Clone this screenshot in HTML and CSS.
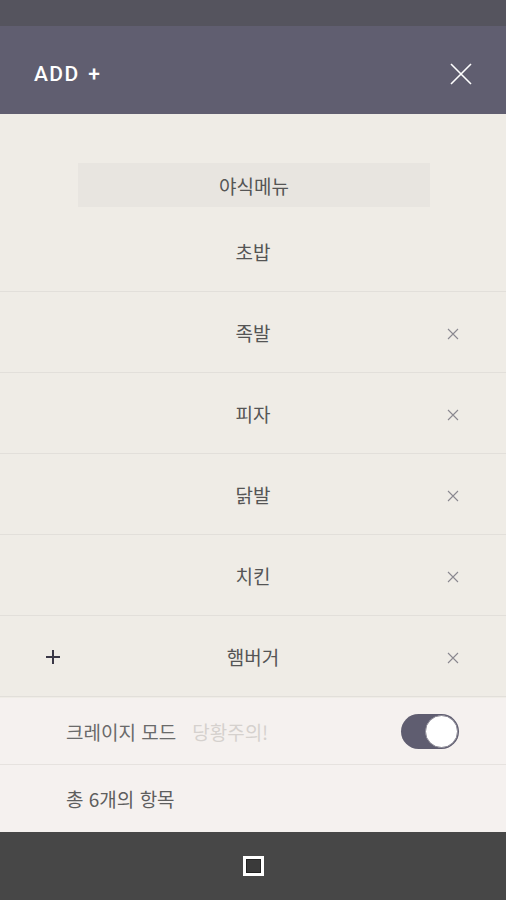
FILE: index.html
```html
<!DOCTYPE html>
<html lang="ko">
<head>
<meta charset="utf-8">
<link rel="stylesheet" href="styles.css">
</head>
<body>
<div class="screen">
  <div class="statusbar"></div>
  <header class="appbar">
    <span class="appbar-title">ADD +</span>
    <svg class="close" width="22" height="22" viewBox="0 0 22 22"><path d="M1 1L21 21M21 1L1 21" stroke="#fff" stroke-width="1.6" fill="none"/></svg>
  </header>
  <main class="content">
    <div class="title-box">야식메뉴</div>
    <ul class="list">
      <li class="row"><span class="lead"></span><span class="label">초밥</span><span class="trail"></span></li>
      <li class="row"><span class="lead"></span><span class="label">족발</span><span class="trail"><svg width="12" height="12" viewBox="0 0 12 12"><path d="M1 1L11 11M11 1L1 11" stroke="#8a8890" stroke-width="1.1"/></svg></span></li>
      <li class="row"><span class="lead"></span><span class="label">피자</span><span class="trail"><svg width="12" height="12" viewBox="0 0 12 12"><path d="M1 1L11 11M11 1L1 11" stroke="#8a8890" stroke-width="1.1"/></svg></span></li>
      <li class="row"><span class="lead"></span><span class="label">닭발</span><span class="trail"><svg width="12" height="12" viewBox="0 0 12 12"><path d="M1 1L11 11M11 1L1 11" stroke="#8a8890" stroke-width="1.1"/></svg></span></li>
      <li class="row"><span class="lead"></span><span class="label">치킨</span><span class="trail"><svg width="12" height="12" viewBox="0 0 12 12"><path d="M1 1L11 11M11 1L1 11" stroke="#8a8890" stroke-width="1.1"/></svg></span></li>
      <li class="row last"><span class="lead"><svg width="14" height="14" viewBox="0 0 14 14"><path d="M7 0V14M0 7H14" stroke="#3a3846" stroke-width="2"/></svg></span><span class="label">햄버거</span><span class="trail"><svg width="12" height="12" viewBox="0 0 12 12"><path d="M1 1L11 11M11 1L1 11" stroke="#8a8890" stroke-width="1.1"/></svg></span></li>
    </ul>
  </main>
  <section class="footer">
    <div class="mode-row">
      <span class="mode-label">크레이지 모드</span>
      <span class="mode-hint">당황주의!</span>
      <span class="toggle"><span class="knob"></span></span>
    </div>
    <div class="count-row">총 6개의 항목</div>
  </section>
  <nav class="navbar">
    <span class="nav-square"></span>
  </nav>
</div>
</body>
</html>
```
FILE: styles.css
```css
* { box-sizing: border-box; }
html, body { margin: 0; padding: 0; }
body {
  font-family: "Noto Sans CJK KR", "Noto Sans", sans-serif;
  background: #efece6;
}
.screen {
  width: 506px;
  height: 900px;
  display: flex;
  flex-direction: column;
  overflow: hidden;
}
.statusbar {
  height: 26px;
  background: #55545e;
}
.appbar {
  height: 88px;
  background: #605e70;
  display: flex;
  align-items: center;
  justify-content: space-between;
  padding: 8px 34px 0 34px;
}
.appbar-title {
  color: #fff;
  font-family: "Roboto", "Noto Sans", sans-serif;
  font-size: 21px;
  font-weight: 500;
  letter-spacing: 1.4px;
  word-spacing: 2px;
}
.close { margin-right: 0; }
.content {
  background: #efece6;
  padding-top: 49px;
  flex: 1;
}
.title-box {
  margin: 0 76px 0 78px;
  height: 44px;
  background: #e8e5e0;
  display: flex;
  align-items: center;
  justify-content: center;
  color: #555;
  font-size: 19px;
}
.list {
  list-style: none;
  margin: 4px 0 0 0;
  padding: 0;
}
.row {
  height: 81px;
  border-bottom: 1px solid #e2dfda;
  display: grid;
  grid-template-columns: 106px 1fr 106px;
  align-items: center;
  color: #555;
  font-size: 19px;
}
.lead { display: flex; justify-content: flex-start; padding-left: 46px; padding-top: 2px; }
.label { text-align: center; }
.trail { display: flex; justify-content: flex-end; padding-right: 47px; padding-top: 4px; }
.footer {
  background: #f5f1ef;
  height: 134px;
}
.mode-row {
  height: 67px;
  border-bottom: 1px solid #e6e2df;
  display: flex;
  align-items: center;
  padding: 0 47px 0 66px;
  font-size: 19px;
}
.mode-label { color: #6a6a6a; }
.mode-hint { color: #d5d1ce; margin-left: 16px; flex: 1; }
.toggle {
  width: 58px;
  height: 35px;
  border-radius: 18px;
  background: #5f5d70;
  display: flex;
  align-items: center;
  justify-content: flex-end;
  padding: 1px;
}
.knob {
  width: 33px;
  height: 33px;
  border-radius: 50%;
  background: #fff;
  border: 1.5px solid #8d8b96;
}
.count-row {
  height: 67px;
  display: flex;
  align-items: center;
  padding-left: 66px;
  font-size: 19px;
  color: #5e5e5e;
}
.navbar {
  height: 68px;
  background: #474747;
  display: flex;
  align-items: center;
  justify-content: center;
}
.nav-square {
  width: 21px;
  height: 20px;
  border: 3px solid #fff;
  background: #3a3a3a;
  box-shadow: inset 0 0 0 1px #222;
}
```
